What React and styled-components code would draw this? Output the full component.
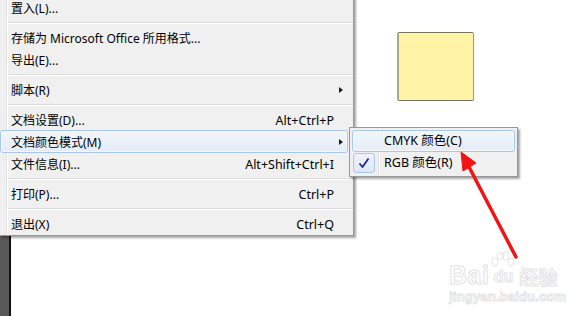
import React from "react";
import styled, { createGlobalStyle } from "styled-components";

const Global = createGlobalStyle`
  html, body { margin: 0; padding: 0; background: #fff; }
  body { font-family: "Noto Sans", "Noto Sans CJK SC", sans-serif; }
  * { box-sizing: border-box; }
`;

const Page = styled.div`
  position: relative;
  width: 587px;
  height: 316px;
  overflow: hidden;
  display: flex;
  background: #fff;
`;

const Sidebar = styled.div`
  width: 11px;
  background: #595959;
  border-right: 2px solid #121212;
`;

const Canvas = styled.div`
  flex: 1;
  background: #ffffff;
`;

const Swatch = styled.div`
  position: absolute;
  left: 397px;
  top: 32px;
  width: 77px;
  height: 69px;
  background: #fff4a6;
  border: 1px solid #76735f;
  border-left: 2px solid #aaa690;
  border-right: 1px solid #9c9984;
  border-radius: 2px;
`;

const Menu = styled.div`
  position: absolute;
  left: 0;
  top: -3px;
  width: 354px;
  background: #f0f0f0;
  border-right: 1px solid #979797;
  border-bottom: 1px solid #979797;
  box-shadow: 2px 2px 2px rgba(0, 0, 0, 0.35);
  display: flex;
  flex-direction: column;
  font-size: 12px;
  color: #000;
  z-index: 2;
  &::before {
    content: "";
    position: absolute;
    left: 6px;
    top: 0;
    bottom: 0;
    width: 1px;
    background: #e0e0e0;
    box-shadow: 1px 0 0 #fff;
  }
`;

const Row = styled.div`
  position: relative;
  height: 22px;
  display: grid;
  grid-template-columns: 1fr auto 19px;
  align-items: center;
  padding-left: 11px;
  white-space: nowrap;
  z-index: 1;
  &::before {
    content: "";
    display: ${(p) => (p.$active ? "block" : "none")};
    position: absolute;
    left: 0;
    right: 5px;
    top: -1px;
    bottom: 0;
    border: 1px solid #a8c7ec;
    border-radius: 3px;
    background: linear-gradient(#f2f6fb, #e4ecf7);
    box-shadow: inset 0 0 0 1px rgba(255, 255, 255, 0.6);
    z-index: -1;
  }
`;

const Label = styled.span`
  line-height: 21px;
`;

const Shortcut = styled.span`
  line-height: 21px;
  font-size: 12.5px;
  text-align: right;
`;

const ArrowSlot = styled.span`
  display: flex;
  align-items: center;
  padding-left: 5px;
`;

const Arrow = styled.span`
  width: 0;
  height: 0;
  border-top: 3.5px solid transparent;
  border-bottom: 3.5px solid transparent;
  border-left: 4px solid #1a1a1a;
`;

const Separator = styled.div`
  height: 8px;
  padding: 3px 0 0 7px;
  &::after {
    content: "";
    display: block;
    height: 1px;
    background: #dcdcdc;
    box-shadow: 0 1px 0 #ffffff;
  }
`;

const SubMenu = styled.div`
  position: absolute;
  left: 349px;
  top: 127px;
  width: 169px;
  padding: 2px;
  background: #f0f0f0;
  border: 1px solid #979797;
  box-shadow: 2px 2px 2px rgba(0, 0, 0, 0.35);
  display: flex;
  flex-direction: column;
  font-size: 12.5px;
  color: #000;
  z-index: 3;
  &::before {
    content: "";
    position: absolute;
    left: 28px;
    top: 0;
    bottom: 0;
    width: 1px;
    background: #e0e0e0;
    box-shadow: 1px 0 0 #fff;
  }
`;

const SubRow = styled.div`
  position: relative;
  height: 22px;
  display: flex;
  align-items: center;
  white-space: nowrap;
  z-index: 1;
  border-radius: 3px;
  ${(p) =>
    p.$active &&
    `
    border: 1px solid #a8c7ec;
    background: linear-gradient(#f2f6fb, #e4ecf7);
    box-shadow: inset 0 0 0 1px rgba(255,255,255,0.6);
  `}
`;

const IconCell = styled.span`
  width: 22px;
  height: 20px;
  margin-left: ${(p) => (p.$active ? "0" : "1px")};
  display: flex;
  align-items: center;
  justify-content: center;
  border-radius: 3px;
  ${(p) =>
    p.$checked &&
    `
    border: 1px solid #a8c7ec;
    background: linear-gradient(#eef3fb, #dde7f6);
  `}
`;

const SubLabel = styled.span`
  padding-left: 9px;
  line-height: 20px;
`;

const Annotation = styled.svg`
  position: absolute;
  left: 0;
  top: 0;
  z-index: 5;
  pointer-events: none;
`;

const Watermark = styled.div`
  position: absolute;
  left: 449px;
  top: 252px;
  z-index: 4;
  display: flex;
  flex-direction: column;
  align-items: flex-start;
  color: #ffffff;
  -webkit-text-stroke: 1px #e4e4e4;
  font-family: "Liberation Sans", "Noto Sans CJK SC", sans-serif;
  font-weight: bold;
`;

const Wordmark = styled.div`
  display: flex;
  align-items: flex-end;
  height: 36px;
`;

const Bai = styled.span`
  font-size: 25px;
  line-height: 25px;
  letter-spacing: 0.5px;
`;

const PawBox = styled.span`
  display: flex;
  flex-direction: column;
  align-items: center;
  width: 28px;
`;

const Du = styled.span`
  font-size: 16px;
  line-height: 16px;
  margin-bottom: 3px;
`;

const Jingyan = styled.span`
  font-size: 19px;
  line-height: 22px;
  margin-left: 2px;
  font-family: "Noto Sans CJK SC", sans-serif;
`;

const Domain = styled.span`
  font-size: 13px;
  line-height: 16px;
  letter-spacing: 0.2px;
  margin-top: 1px;
`;

const Check = () => (
  <svg width="12" height="12" viewBox="0 0 12 12">
    <path d="M1.5 6.5 L4.5 10 L10.5 1.5" fill="none" stroke="#1f2a86" strokeWidth="1.8" strokeLinejoin="round" />
  </svg>
);

const Paw = () => (
  <svg width="26" height="20" viewBox="0 0 26 20" style={{ marginBottom: -2 }}>
    <g fill="#fff" stroke="#e4e4e4" strokeWidth="1">
      <ellipse cx="5" cy="11" rx="3" ry="4" />
      <ellipse cx="10" cy="5" rx="3" ry="4" />
      <ellipse cx="16" cy="5" rx="3" ry="4" />
      <ellipse cx="21" cy="11" rx="3" ry="4" />
    </g>
  </svg>
);

const items = [
  { label: "置入(L)..." },
  "sep",
  { label: "存储为 Microsoft Office 所用格式..." },
  { label: "导出(E)..." },
  "sep",
  { label: "脚本(R)", sub: true },
  "sep",
  { label: "文档设置(D)...", key: "Alt+Ctrl+P" },
  { label: "文档颜色模式(M)", sub: true, active: true },
  { label: "文件信息(I)...", key: "Alt+Shift+Ctrl+I" },
  "sep",
  { label: "打印(P)...", key: "Ctrl+P" },
  "sep",
  { label: "退出(X)", key: "Ctrl+Q" },
];

export default function App() {
  return (
    <>
      <Global />
      <Page>
        <Sidebar />
        <Canvas />
        <Swatch />
        <Menu>
          {items.map((it, i) =>
            it === "sep" ? (
              <Separator key={i} />
            ) : (
              <Row key={i} $active={it.active}>
                <Label>{it.label}</Label>
                <Shortcut>{it.key || ""}</Shortcut>
                <ArrowSlot>{it.sub && <Arrow />}</ArrowSlot>
              </Row>
            )
          )}
        </Menu>
        <SubMenu>
          <SubRow $active>
            <IconCell $active />
            <SubLabel>CMYK 颜色(C)</SubLabel>
          </SubRow>
          <SubRow>
            <IconCell $checked>
              <Check />
            </IconCell>
            <SubLabel>RGB 颜色(R)</SubLabel>
          </SubRow>
        </SubMenu>
        <Watermark>
          <Wordmark>
            <Bai>Bai</Bai>
            <PawBox>
              <Paw />
              <Du>du</Du>
            </PawBox>
            <Jingyan>经验</Jingyan>
          </Wordmark>
          <Domain>jingyan.baidu.com</Domain>
        </Watermark>
        <Annotation width="587" height="316" viewBox="0 0 587 316">
          <line x1="516" y1="257" x2="468" y2="165" stroke="#f21414" strokeWidth="3.5" strokeLinecap="round" />
          <polygon points="461,152 476,163 463,171" fill="#f21414" stroke="#f21414" strokeWidth="1" strokeLinejoin="round" />
        </Annotation>
      </Page>
    </>
  );
}
